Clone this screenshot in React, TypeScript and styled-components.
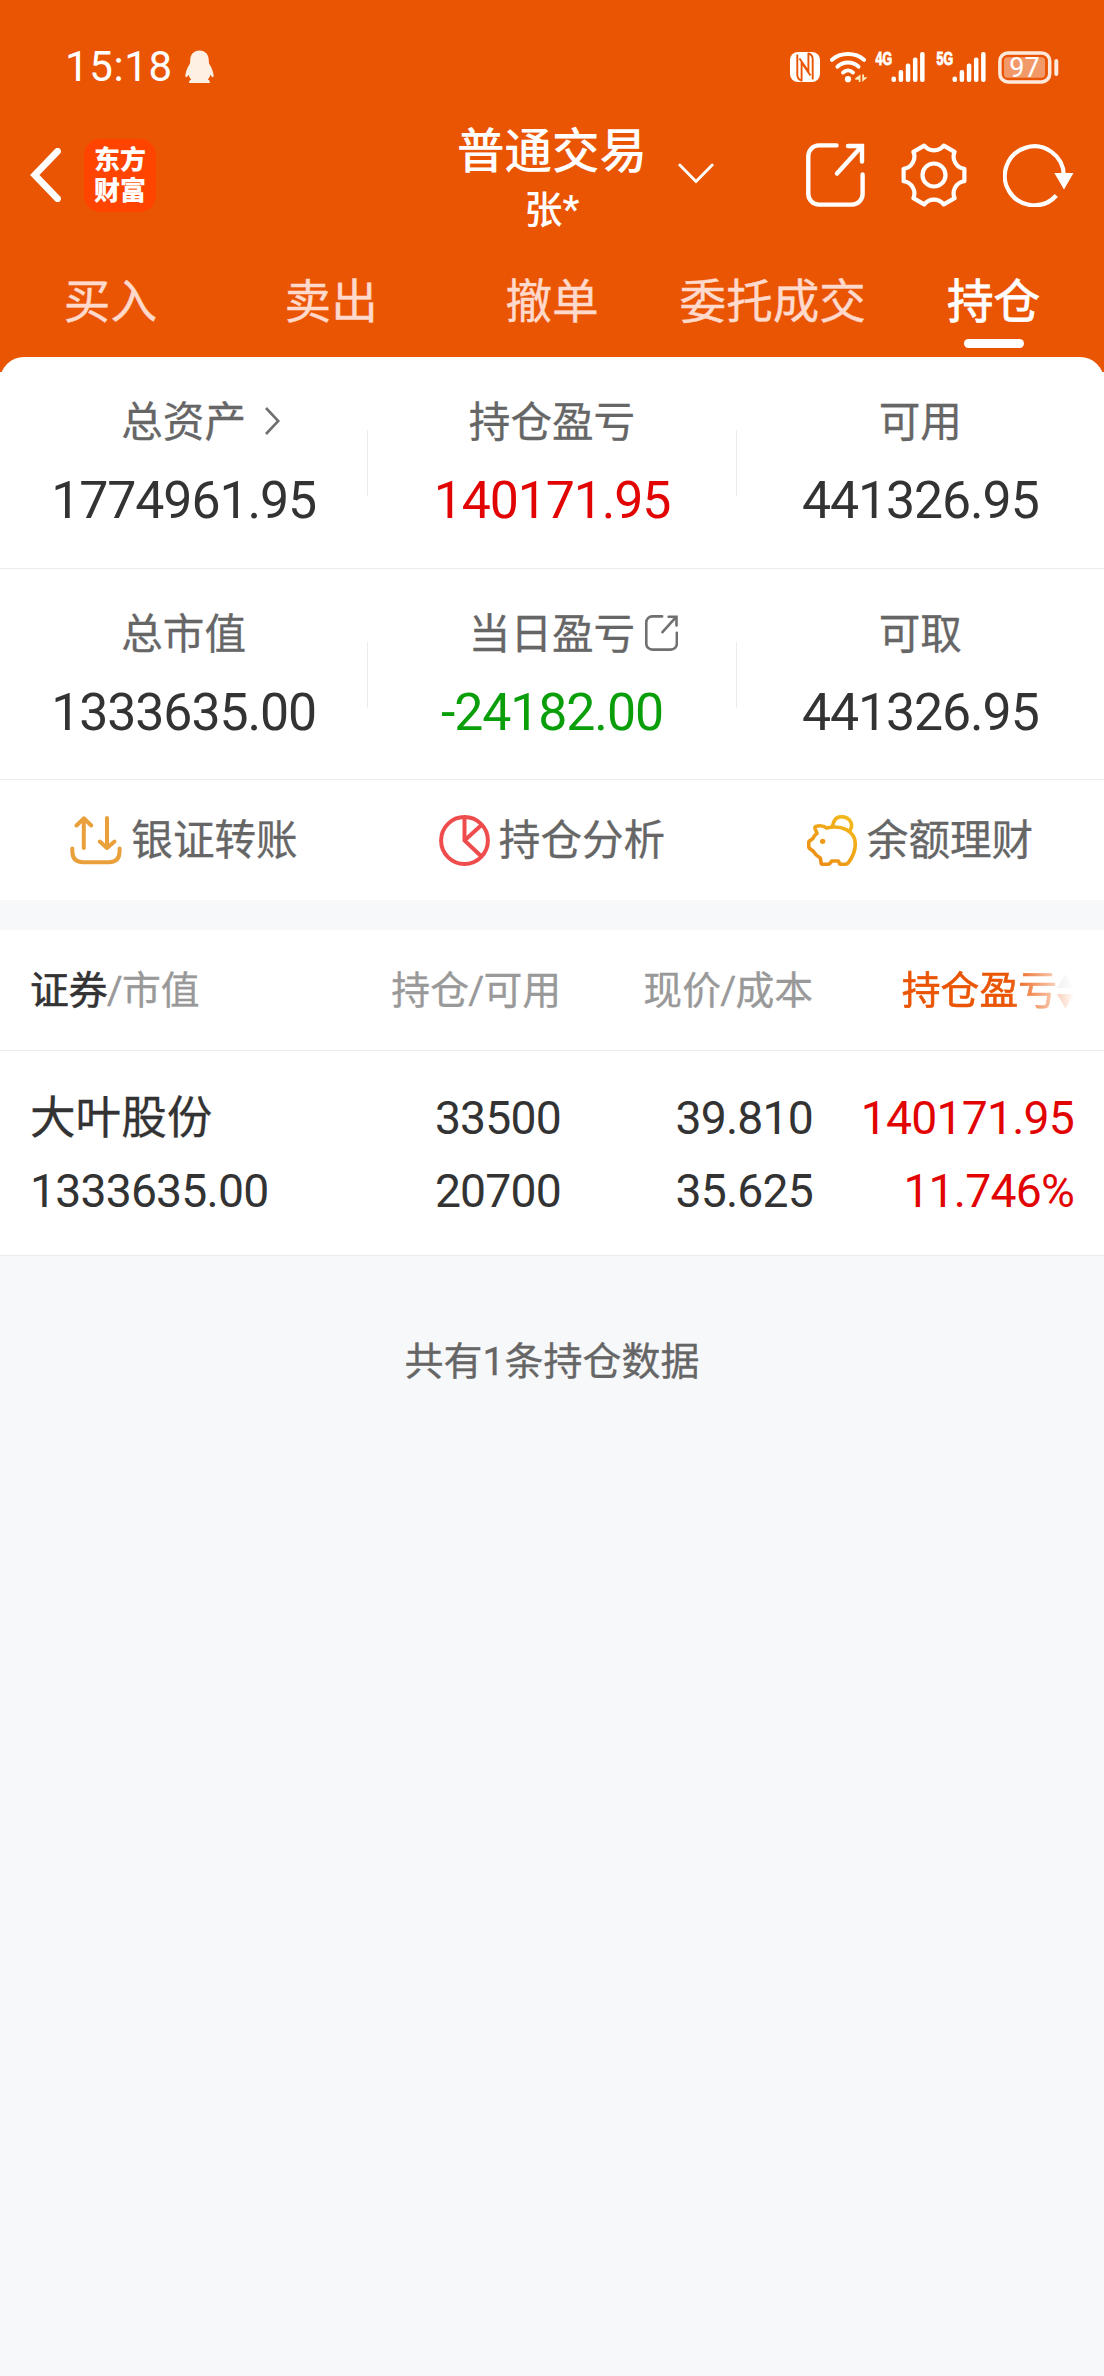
import React from "react";
import styled, { createGlobalStyle } from "styled-components";

const ORANGE = "#ea5504";
const RED = "#e20303";
const GREEN = "#0a9f0a";

const GlobalStyle = createGlobalStyle`
  body {
    margin: 0;
    background: #f7f8fa;
    font-family: Roboto, "Noto Sans CJK SC", sans-serif;
    color: #333;
  }
  svg { display: block; flex: none; }
`;

const Page = styled.main`
  width: 1104px;
  min-height: 2376px;
  background: #f7f8fa;
`;

/* ---------- header ---------- */

const Header = styled.header`
  height: 372px;
  background: ${ORANGE};
  color: #fff;
`;

const StatusBar = styled.div`
  display: flex;
  align-items: center;
  box-sizing: border-box;
  height: 112px;
  padding: 22px 45px 0 65px;
`;

const Clock = styled.span`
  font-size: 42px;
  line-height: 50px;
  letter-spacing: 0.6px;
  margin-right: 12px;
`;

const StatusIcons = styled.div`
  display: flex;
  align-items: center;
  margin-left: auto;
`;

const Gap = styled.span<{ $w: number }>`
  width: ${(p) => p.$w}px;
`;

const NavBar = styled.div`
  display: grid;
  grid-template-columns: 1fr auto 1fr;
  align-items: center;
  height: 126px;
  padding: 0 30px;
`;

const NavLeft = styled.div`
  display: flex;
  align-items: center;
  gap: 22px;
`;

const Logo = styled.div`
  display: flex;
  flex-direction: column;
  align-items: center;
  justify-content: center;
  box-sizing: border-box;
  width: 72px;
  height: 73px;
  padding-bottom: 4px;
  border-radius: 16px;
  background: #ff4400;
  font: 900 26px/31.5px "Noto Sans CJK SC", sans-serif;
`;

const TitleBlock = styled.div`
  padding-top: 10px;
  text-align: center;
`;

const Title = styled.h1`
  margin: 0;
  font-size: 47.5px;
  font-weight: 500;
  line-height: 60px;
`;

const Subtitle = styled.div`
  font-size: 38px;
  font-weight: 500;
  line-height: 56px;
`;

const NavRight = styled.div`
  display: flex;
  align-items: center;
  padding-left: 31px;
`;

const NavIcons = styled.div`
  display: flex;
  align-items: center;
  gap: 36px;
  margin-left: auto;
`;

const Tabs = styled.nav`
  display: grid;
  grid-template-columns: repeat(5, 1fr);
  padding-top: 34px;
`;

const Tab = styled.div<{ $active?: boolean }>`
  display: flex;
  flex-direction: column;
  align-items: center;
  font-size: 46.6px;
  line-height: 60px;
  white-space: nowrap;
  color: ${(p) => (p.$active ? "#fff" : "#ffd9cb")};
  -webkit-text-stroke: ${(p) => (p.$active ? 0.8 : 0.4)}px currentColor;
`;

const TabLine = styled.i`
  width: 60px;
  height: 9px;
  margin-top: 7px;
  border-radius: 5px;
  background: #fff;
`;

/* ---------- summary ---------- */

const SheetBack = styled.div`
  display: flow-root;
  background: #fff;
`;

const Sheet = styled.section`
  position: relative;
  margin-top: -15px;
  border-radius: 24px 24px 0 0;
  background: #fff;
`;

const MetricRow = styled.div<{ $h: number }>`
  display: grid;
  grid-template-columns: 1fr 1px 1fr 1px 1fr;
  box-sizing: border-box;
  height: ${(p) => p.$h}px;
  border-bottom: 1px solid #ebebeb;
`;

const Metric = styled.div`
  display: flex;
  flex-direction: column;
  align-items: center;
  padding-top: 41px;
`;

const Divider = styled.i`
  height: 66px;
  margin-top: 73px;
  background: #ebebeb;
`;

const MetricLabel = styled.div`
  position: relative;
  font-size: 41.6px;
  line-height: 50px;
  color: #666;
  -webkit-text-stroke: 0.3px currentColor;
`;

const LabelIcon = styled.span<{ $gap: number }>`
  position: absolute;
  left: 100%;
  top: -1px;
  display: flex;
  align-items: center;
  height: 48px;
  margin-left: ${(p) => p.$gap}px;
`;

const MetricValue = styled.div<{ $color?: string }>`
  margin-top: 23px;
  font-size: 51.8px;
  line-height: 60px;
  letter-spacing: -1.1px;
  color: ${(p) => p.$color ?? "#333"};
`;

const Actions = styled.div`
  display: grid;
  grid-template-columns: repeat(3, 1fr);
  height: 120px;
`;

const Action = styled.div`
  display: flex;
  align-items: center;
  justify-content: center;
  gap: 9px;
  font-size: 41.6px;
  line-height: 60px;
  color: #666;
  -webkit-text-stroke: 0.3px currentColor;
`;

const ActionText = styled.span`
  padding-top: 2px;
`;

/* ---------- holdings ---------- */

const Holdings = styled.section`
  margin-top: 30px;
  background: #fff;
`;

const HeadRow = styled.div`
  display: grid;
  grid-template-columns: 279px 252px 252px 261px;
  align-items: center;
  box-sizing: border-box;
  height: 121px;
  padding: 2px 30px 0;
  border-bottom: 1px solid #ebebeb;
  font-size: 38.8px;
  line-height: 60px;
  color: #999;
  -webkit-text-stroke: 0.3px currentColor;
`;

const HeadCell = styled.div<{ $right?: boolean }>`
  text-align: ${(p) => (p.$right ? "right" : "left")};
`;

const Strong = styled.span`
  color: #333;
  -webkit-text-stroke: 0.6px currentColor;
`;

const Slash = styled.span`
  margin: 0 -0.8px;
`;

const SortCell = styled.div`
  display: flex;
  align-items: center;
  justify-content: flex-end;
  color: ${ORANGE};
  -webkit-text-stroke: 0.6px currentColor;
  mask-image: linear-gradient(to right, #000 196px, transparent 262px);
`;

const DataRow = styled.div`
  display: grid;
  grid-template-columns: 279px 252px 252px 261px;
  box-sizing: border-box;
  height: 205px;
  padding: 31px 30px 0;
  border-bottom: 1px solid #ebebeb;
  font-size: 46.3px;
  line-height: 73px;
  letter-spacing: -0.8px;
`;

const StockName = styled.span`
  font-size: 45.6px;
  letter-spacing: 0;
  -webkit-text-stroke: 0.3px currentColor;
`;

const DataCell = styled.div<{ $right?: boolean; $color?: string }>`
  display: flex;
  flex-direction: column;
  align-items: ${(p) => (p.$right ? "flex-end" : "flex-start")};
  color: ${(p) => p.$color ?? "#333"};
`;

const Footer = styled.footer`
  padding-top: 76px;
  text-align: center;
  font-size: 39px;
  line-height: 60px;
  color: #666;
  -webkit-text-stroke: 0.3px currentColor;
`;

/* ---------- icons ---------- */

const Penguin = () => (
  <svg width="29" height="34" viewBox="0 0 29 34" fill="#fff0e4">
    <path d="M14.5 0.5C8.6 0.5 5.2 4.8 5.2 10.2c0 1.600 0 2.600-.5 3.800C2.500 17.500.2 22.500.4 26.200c.1 1.700 1.200 1.600 3.300-1.400.4 2 1.300 3.500 2.600 4.800-1.700.6-2.200 1.500-2.200 3.400h20.800c0-1.900-.5-2.800-2.200-3.400 1.300-1.300 2.200-2.800 2.600-4.800 2.100 3 3.200 3.100 3.300 1.400.2-3.700-2.100-8.700-4.300-12.200-.5-1.200-.5-2.200-.5-3.800C23.800 4.800 20.400.5 14.500.5z" />
  </svg>
);

const Nfc = () => (
  <svg width="30" height="30" viewBox="0 0 30 30">
    <rect width="30" height="30" rx="8" fill="#fff" />
    <g fill="none" stroke={ORANGE} strokeWidth="1.900" strokeLinejoin="round">
      <path d="M7.300 2.500V23Q7.500 27.500 11.600 28.500V10.500L20.500 23.500" />
      <path d="M22.700 27.500V7Q22.500 2.500 18.400 1.500V19.500L9.500 6.500" />
    </g>
  </svg>
);

const Wifi = () => (
  <svg width="38" height="31" viewBox="0 0 38 31" fill="none" stroke="#fff" strokeLinecap="round">
    <path d="M2 7.800C10.500.2 25.500.2 34 7.800" strokeWidth="4" />
    <path d="M7.500 14.700C13 9 23 9 28.500 14.700" strokeWidth="4" />
    <path d="M13 20.600C15.800 17.700 20.200 17.700 23 20.600" strokeWidth="3.800" />
    <circle cx="18" cy="27.200" r="3.100" fill="#fff" stroke="none" />
    <path d="M30.500 22.500V30H28.800V27.800H25.200V26.200zM32.200 22.500V30L37.500 25.200H34V22.500z" fill="#ffe9bd" stroke="none" />
  </svg>
);

const NetLabel = styled.text`
  font: 900 18px "Liberation Sans Narrow", "Liberation Sans", sans-serif;
`;

const Signal = ({ label }: { label: string }) => (
  <svg width="50" height="44" viewBox="0 -6 50 44" fill="#fff" stroke="#fff">
    <NetLabel x="0.500" y="13.500" textLength="16.500" lengthAdjust="spacingAndGlyphs" strokeWidth="0.900">
      {label}
    </NetLabel>
    <g stroke="none">
      {[5.500, 12, 18.500, 24.500, 30].map((h, i) => (
        <rect key={h} x={16.500 + i * 7.150} y={31 - h} width="4.500" height={h} rx="2" />
      ))}
    </g>
  </svg>
);

const Battery = () => (
  <svg width="61" height="33" viewBox="0 0 61 33">
    <rect x="1.900" y="1.900" width="49.800" height="29" rx="8" fill="none" stroke="#ffe9dc" strokeWidth="3.500" />
    <rect x="6" y="6.200" width="41" height="20.500" rx="3.500" fill="#f2996a" />
    <rect x="56.300" y="8" width="4" height="17" rx="2" fill="#ffe9dc" />
    <text x="26.500" y="26" textAnchor="middle" fontSize="27" fill="#fff" fontFamily="Roboto, sans-serif">
      97
    </text>
  </svg>
);

const Back = () => (
  <svg width="32" height="54" viewBox="0 0 32 54" fill="none" stroke="#fff" strokeWidth="6.800">
    <path d="M27.500 3.300L4.800 27 27.500 50.700" strokeLinecap="round" />
  </svg>
);

const Chevron = () => (
  <svg width="36" height="24" viewBox="0 0 36 24" fill="none" stroke="#fff" strokeWidth="2.800" strokeLinecap="round">
    <path d="M1.800 2L18 18.600 34.200 2" />
  </svg>
);

const ShareIcon = ({ size, color, weight }: { size: number; color: string; weight: number }) => (
  <svg width={(size * 59) / 64} height={size} viewBox="0 0 59 64" fill="none" stroke={color} strokeWidth={weight} strokeLinecap="round">
    <path d="M30.500 2.400H13A10.700 10.700 0 0 0 2.300 13V51A10.700 10.700 0 0 0 13 61.600H46A10.700 10.700 0 0 0 56.600 51V31.500" />
    <path d="M42 3H56V18.500M55.500 3.500L31 30.500" />
  </svg>
);

const gearPath = () => {
  const point = (deg: number) => {
    const a = (deg * Math.PI) / 180;
    return `${(33 + 31 * Math.cos(a)).toFixed(2)} ${(32 + 31 * Math.sin(a)).toFixed(2)}`;
  };
  let d = `M${point(-11.600)}`;
  for (let k = 0; k < 6; k++) {
    d += `L${point(k * 60 + 11.600)}A12.300 12.300 0 0 0 ${point(k * 60 + 48.400)}`;
  }
  return `${d}Z`;
};

const Gear = () => (
  <svg width="66" height="64" viewBox="0 0 66 64" fill="none" stroke="#fff" strokeWidth="4.200" strokeLinejoin="round">
    <path d={gearPath()} />
    <circle cx="33" cy="32" r="11.500" />
  </svg>
);

const Refresh = () => (
  <svg width="71" height="63" viewBox="0 0 71 63">
    <path d="M53.300 51.500A29.500 29.500 0 1 1 60.800 31" fill="none" stroke="#fff" strokeWidth="4.200" />
    <path d="M51.300 29H70.500L61 45.500Z" fill="#fff" />
  </svg>
);

const Arrow = () => (
  <svg width="15" height="28" viewBox="0 0 15 28" fill="none" stroke="#707070" strokeWidth="2.600">
    <path d="M1 1L13.300 14 1 27" />
  </svg>
);

const Transfer = () => (
  <svg width="52" height="49" viewBox="0 0 52 49" fill="none" stroke="#e9a03a" strokeWidth="4" strokeLinecap="round" strokeLinejoin="round">
    <path d="M13.800 32V2.500M6.500 9.500L13.800 2.300 21.200 9.500" />
    <path d="M37 2V31M29.800 25.500L37 32 44.500 25.500" />
    <path d="M2.300 32.500V35Q2.300 46.200 13 46.200H39Q49.600 46.200 49.600 35V32.500" />
  </svg>
);

const Pie = () => (
  <svg width="51" height="51" viewBox="0 0 51 51" fill="none" stroke="#ef4d4d" strokeWidth="4">
    <circle cx="25.500" cy="25.500" r="23.400" />
    <path d="M25.500 2V25.500L42.500 41.500M25.500 25.500L42.500 10" />
  </svg>
);

const Piggy = () => (
  <svg width="51" height="51" viewBox="18 27 153 153" fill="none" stroke="url(#pig)" strokeWidth="11" strokeLinejoin="round" strokeLinecap="round">
    <defs>
      <linearGradient id="pig" x1="40" y1="170" x2="150" y2="40" gradientUnits="userSpaceOnUse">
        <stop offset="0" stopColor="#ec8d14" />
        <stop offset="1" stopColor="#f3b91c" />
      </linearGradient>
    </defs>
    <path d="M48 82L42 67Q41 61 49 60Q66 57 77 66C98 61 118 62 136 71C156 82 163 97 163 114C163 137 153 155 143 169Q139 175 131 175H121Q115 175 114 169L112 165H92L89 170Q86 175 79 175H67Q60 175 60 168L58 156Q44 148 37 136L29 130Q23 126 23 120V111Q23 104 30 102L36 97Q39 89 48 82Z" />
    <path d="M95 59C98 41 109 32 122 32C141 32 155 47 151 64L146 76" />
    <circle cx="65" cy="106" r="8" fill="#ef9a18" stroke="none" />
  </svg>
);

const SortArrows = () => (
  <svg width="17" height="35" viewBox="0 0 17 35">
    <path d="M8.500 0L17 14H0Z" fill="#ccc" />
    <path d="M0 20H17L8.500 34.500Z" fill={ORANGE} />
  </svg>
);

/* ---------- data ---------- */

const tabs = ["买入", "卖出", "撤单", "委托成交", "持仓"];

type MetricItem = { label: string; value: string; color?: string; icon?: React.ReactNode; gap?: number };

const metricRows: { height: number; items: MetricItem[] }[] = [
  {
    height: 212,
    items: [
      { label: "总资产", value: "1774961.95", icon: <Arrow />, gap: 19 },
      { label: "持仓盈亏", value: "140171.95", color: RED },
      { label: "可用", value: "441326.95" },
    ],
  },
  {
    height: 211,
    items: [
      { label: "总市值", value: "1333635.00" },
      {
        label: "当日盈亏",
        value: "-24182.00",
        color: GREEN,
        icon: <ShareIcon size={36} color="#707070" weight={4.600} />,
        gap: 10,
      },
      { label: "可取", value: "441326.95" },
    ],
  },
];

const actions = [
  { label: "银证转账", icon: <Transfer /> },
  { label: "持仓分析", icon: <Pie /> },
  { label: "余额理财", icon: <Piggy /> },
];

const App = () => (
  <Page>
    <GlobalStyle />
    <Header>
      <StatusBar>
        <Clock>15:18</Clock>
        <Penguin />
        <StatusIcons>
          <Nfc />
          <Gap $w={10} />
          <Wifi />
          <Gap $w={7.5} />
          <Signal label="4G" />
          <Gap $w={11} />
          <Signal label="5G" />
          <Gap $w={12} />
          <Battery />
        </StatusIcons>
      </StatusBar>
      <NavBar>
        <NavLeft>
          <Back />
          <Logo>
            <span>东方</span>
            <span>财富</span>
          </Logo>
        </NavLeft>
        <TitleBlock>
          <Title>普通交易</Title>
          <Subtitle>张*</Subtitle>
        </TitleBlock>
        <NavRight>
          <Chevron />
          <NavIcons>
            <ShareIcon size={64} color="#fff" weight={4.400} />
            <Gear />
            <Refresh />
          </NavIcons>
        </NavRight>
      </NavBar>
      <Tabs>
        {tabs.map((t, i) => (
          <Tab key={t} $active={i === 4}>
            {t}
            {i === 4 && <TabLine />}
          </Tab>
        ))}
      </Tabs>
    </Header>

    <SheetBack>
      <Sheet>
        {metricRows.map((row) => (
          <MetricRow key={row.height} $h={row.height}>
            {row.items.map((m, i) => (
              <React.Fragment key={m.label}>
                {i > 0 && <Divider />}
                <Metric>
                  <MetricLabel>
                    {m.label}
                    {m.icon && <LabelIcon $gap={m.gap ?? 0}>{m.icon}</LabelIcon>}
                  </MetricLabel>
                  <MetricValue $color={m.color}>{m.value}</MetricValue>
                </Metric>
              </React.Fragment>
            ))}
          </MetricRow>
        ))}
        <Actions>
          {actions.map((a) => (
            <Action key={a.label}>
              {a.icon}
              <ActionText>{a.label}</ActionText>
            </Action>
          ))}
        </Actions>
      </Sheet>
    </SheetBack>

    <Holdings>
      <HeadRow>
        <HeadCell>
          <Strong>证券</Strong>
          <Slash>/</Slash>市值
        </HeadCell>
        <HeadCell $right>
          持仓<Slash>/</Slash>可用
        </HeadCell>
        <HeadCell $right>
          现价<Slash>/</Slash>成本
        </HeadCell>
        <SortCell>
          持仓盈亏
          <SortArrows />
        </SortCell>
      </HeadRow>
      <DataRow>
        <DataCell>
          <StockName>大叶股份</StockName>
          <span>1333635.00</span>
        </DataCell>
        <DataCell $right>
          <span>33500</span>
          <span>20700</span>
        </DataCell>
        <DataCell $right>
          <span>39.810</span>
          <span>35.625</span>
        </DataCell>
        <DataCell $right $color={RED}>
          <span>140171.95</span>
          <span>11.746%</span>
        </DataCell>
      </DataRow>
    </Holdings>
    <Footer>共有1条持仓数据</Footer>
  </Page>
);

export default App;
